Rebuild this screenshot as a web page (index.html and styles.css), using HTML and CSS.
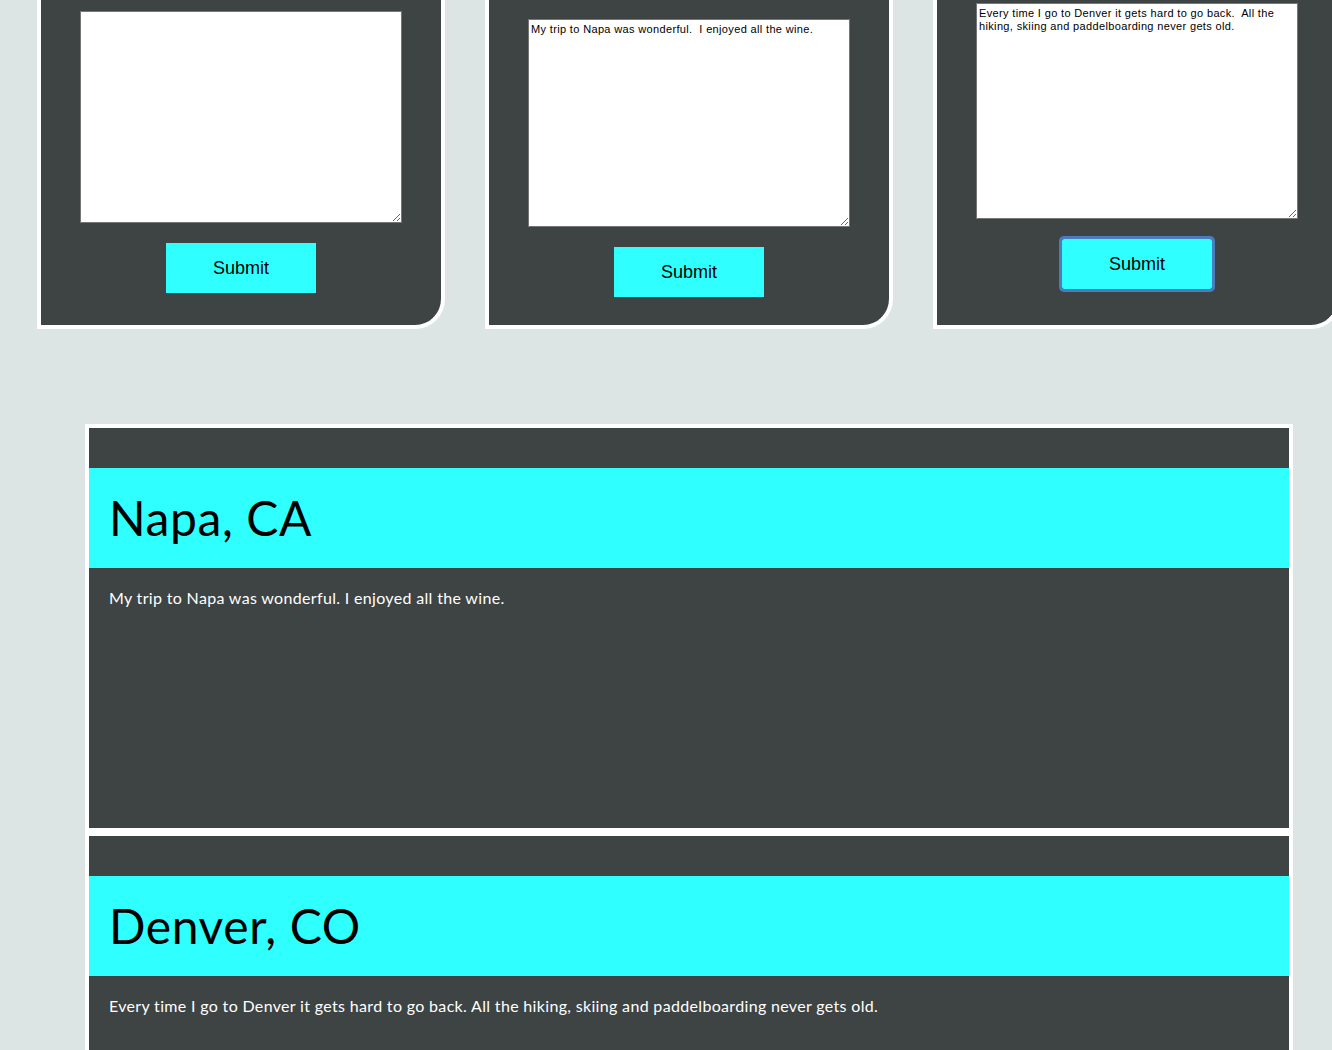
FILE: index.html
```html
<!DOCTYPE html>
<html lang="en">
<head>
<meta charset="utf-8">
<title>Travel Journal</title>
<link rel="stylesheet" href="styles.css">
</head>
<body>
<section class="cards">
  <form class="card card-empty">
    <textarea class="note"></textarea>
    <button type="button" class="submit">Submit</button>
  </form>
  <form class="card card-napa">
    <textarea class="note">My trip to Napa was wonderful.  I enjoyed all the wine.</textarea>
    <button type="button" class="submit">Submit</button>
  </form>
  <form class="card card-denver">
    <textarea class="note">Every time I go to Denver it gets hard to go back.  All the hiking, skiing and paddelboarding never gets old.</textarea>
    <button type="button" class="submit submit-focus">Submit</button>
  </form>
</section>

<section class="entries">
  <article class="entry">
    <header class="entry-head"><h2 class="entry-title">Napa, CA</h2></header>
    <div class="entry-body"><p class="entry-text">My trip to Napa was wonderful. I enjoyed all the wine.</p></div>
  </article>
  <article class="entry">
    <header class="entry-head"><h2 class="entry-title">Denver, CO</h2></header>
    <div class="entry-body"><p class="entry-text">Every time I go to Denver it gets hard to go back. All the hiking, skiing and paddelboarding never gets old.</p></div>
  </article>
</section>
</body>
</html>
```

FILE: styles.css
```css
html, body {
  margin: 0;
  padding: 0;
}

body {
  background: #dde5e4;
  overflow-x: hidden;
  font-family: Lato, "Open Sans", sans-serif;
}

.cards {
  display: flex;
  gap: 40px;
  padding-left: 37px;
  width: max-content;
}

.card {
  box-sizing: border-box;
  width: 408px;
  height: 329px;
  margin: 0;
  background: #3e4344;
  border: 4px solid #ffffff;
  border-top: 0;
  border-bottom-right-radius: 30px;
  display: flex;
  flex-direction: column;
  align-items: center;
}

.card-empty { padding-top: 11px; }
.card-napa { padding-top: 19px; }
.card-denver { padding-top: 3px; }

.note {
  box-sizing: border-box;
  width: 322px;
  margin: 0 0 20px;
  padding: 3px 2px 2px;
  border: 1px solid #767676;
  background: #ffffff;
  color: #000000;
  font-family: "Liberation Sans", Arial, sans-serif;
  font-size: 11px;
  letter-spacing: 0.35px;
  line-height: 13px;
  resize: both;
  outline: none;
}

.card-empty .note { height: 212px; }
.card-napa .note { height: 208px; }
.card-denver .note { height: 216px; }

.submit {
  width: 150px;
  height: 50px;
  border: 0;
  padding: 0;
  background: #2fffff;
  color: #000000;
  font-family: "Liberation Sans", Arial, sans-serif;
  font-size: 18px;
}

.submit-focus {
  outline: 3px solid #4a7cc0;
  outline-offset: 0;
  border-radius: 2px;
}

.entries {
  margin: 95px 0 0 85px;
  width: 1208px;
}

.entry {
  box-sizing: border-box;
  width: 1208px;
  height: 408px;
  border: 4px solid #ffffff;
  background: #3e4344;
  padding-top: 40px;
}

.entry-head {
  height: 100px;
  background: #2fffff;
  display: flex;
  align-items: center;
  padding-left: 20px;
}

.entry-title {
  margin: 0;
  font-family: Lato, "Open Sans", sans-serif;
  font-weight: 400;
  font-size: 48px;
  letter-spacing: 0.6px;
  line-height: 1;
  color: #000000;
}

.entry-body {
  padding: 20px;
}

.entry-text {
  margin: 0;
  color: #ffffff;
  font-size: 16px;
  letter-spacing: 0.33px;
  line-height: 20px;
}
```
